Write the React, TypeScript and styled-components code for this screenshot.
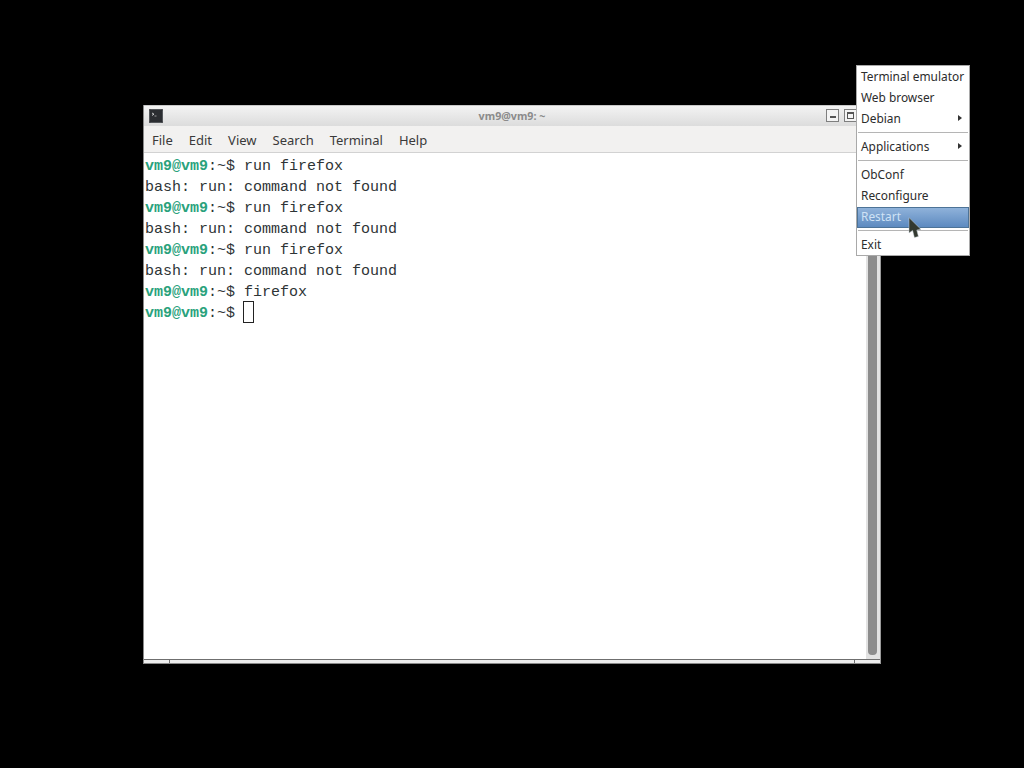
import * as React from "react";
import styled, { createGlobalStyle } from "styled-components";

type Line = { prompt?: boolean; text: string; cursor?: boolean };

const lines: Line[] = [
  { prompt: true, text: "run firefox" },
  { text: "bash: run: command not found" },
  { prompt: true, text: "run firefox" },
  { text: "bash: run: command not found" },
  { prompt: true, text: "run firefox" },
  { text: "bash: run: command not found" },
  { prompt: true, text: "firefox" },
  { prompt: true, text: "", cursor: true },
];

const menuLabels = ["File", "Edit", "View", "Search", "Terminal", "Help"];

export default function App() {
  return (
    <Desktop>
      <GlobalStyle />
      <TermWindow>
        <TitleBar>
          <WinIcon>
            <svg width="14" height="14" viewBox="0 0 14 14">
              <rect width="14" height="14" rx="1" fill="#2b2d31" />
              <rect x="0.5" y="0.5" width="13" height="13" rx="1" fill="none" stroke="#55585c" />
              <path d="M3 4l2 1.2L3 6.4" fill="none" stroke="#d8d8d8" strokeWidth="0.9" />
              <path d="M5.5 7h2" stroke="#a8a8a8" strokeWidth="0.9" />
            </svg>
          </WinIcon>
          <Title>vm9@vm9: ~</Title>
          <WinButton>
            <MinGlyph />
          </WinButton>
          <WinButton>
            <MaxGlyph />
          </WinButton>
        </TitleBar>
        <MenuBar>
          {menuLabels.map((label) => (
            <MenuItem key={label}>{label}</MenuItem>
          ))}
        </MenuBar>
        <TermBody>
          <Screen>
            {lines.map((line, i) => (
              <TermLine key={i}>
                {line.prompt && (
                  <>
                    <Host>vm9@vm9</Host>
                    {":~$ "}
                  </>
                )}
                {line.text}
                {line.cursor && <Cursor />}
              </TermLine>
            ))}
          </Screen>
          <ScrollTrack>
            <ScrollThumb />
          </ScrollTrack>
        </TermBody>
        <BottomEdge>
          <Grip />
          <Grip $right />
        </BottomEdge>
      </TermWindow>
      <RootMenu>
        <RootItem>Terminal emulator</RootItem>
        <RootItem>Web browser</RootItem>
        <RootItem>
          Debian
          <Arrow />
        </RootItem>
        <Sep />
        <RootItem>
          Applications
          <Arrow />
        </RootItem>
        <Sep />
        <RootItem>ObConf</RootItem>
        <RootItem>Reconfigure</RootItem>
        <RootItem $active>Restart</RootItem>
        <Sep />
        <RootItem>Exit</RootItem>
      </RootMenu>
      <Pointer width="14" height="22" viewBox="0 0 14 22">
        <path
          d="M1 0.6L1 16L4.6 13.4L6.4 20.6L10.4 19.4L8.8 13L13 12.4Z"
          fill="#33392f"
          stroke="#c9d2d8"
          strokeWidth="0.5"
        />
      </Pointer>
    </Desktop>
  );
}

//////////
// Style
//////////
const GlobalStyle = createGlobalStyle`
  html, body {
    margin: 0;
    padding: 0;
    background: #000;
  }
`;

const Desktop = styled.div`
  position: relative;
  width: 1024px;
  height: 768px;
  overflow: hidden;
  background: #000;
`;

const TermWindow = styled.div`
  position: absolute;
  left: 143px;
  top: 105px;
  width: 738px;
  height: 559px;
  display: flex;
  flex-direction: column;
  box-sizing: border-box;
  border-left: 1px solid #8a8a8a;
  border-right: 1px solid #9a9a9a;
  background: #fff;
`;

const TitleBar = styled.div`
  height: 21px;
  display: flex;
  align-items: center;
  gap: 5px;
  padding: 0 23px 1px 5px;
  box-sizing: border-box;
  background: linear-gradient(#f3f3f3, #dcdcdc);
  border-top: 1px solid #c8c8c8;
  flex: none;
`;

const WinIcon = styled.div`
  width: 14px;
  height: 14px;
  display: flex;
`;

const Title = styled.div`
  flex: 1;
  text-align: center;
  font: bold 10.7px "Noto Sans", sans-serif;
  color: #8b8b8b;
  padding-left: 35px;
`;

const WinButton = styled.div`
  width: 13px;
  height: 13px;
  box-sizing: border-box;
  border: 1px solid #7f7f7f;
  background: #f4f4f4;
  display: flex;
  align-items: center;
  justify-content: center;
`;

const MinGlyph = styled.div`
  width: 6px;
  height: 2px;
  margin-top: 3px;
  background: #555;
`;

const MaxGlyph = styled.div`
  width: 7px;
  height: 7px;
  box-sizing: border-box;
  border: 1px solid #555;
  border-top-width: 2px;
`;

const MenuBar = styled.div`
  height: 27px;
  display: flex;
  align-items: center;
  gap: 16px;
  padding: 1px 8px 0;
  box-sizing: border-box;
  background: #f2f1f0;
  border-bottom: 1px solid #d2d2d2;
  flex: none;
`;

const MenuItem = styled.div`
  font: 13px "Noto Sans", sans-serif;
  color: #3a3a3a;
`;

const TermBody = styled.div`
  flex: 1;
  min-height: 0;
  display: flex;
`;

const Screen = styled.div`
  flex: 1;
  padding: 3px 0 0 1px;
  font: 15px/21px "Liberation Mono", monospace;
  color: #2e3436;
`;

const TermLine = styled.div`
  height: 21px;
  white-space: pre;
`;

const Host = styled.span`
  font-weight: bold;
  color: #2aa27c;
`;

const Cursor = styled.span`
  display: inline-block;
  width: 11px;
  height: 22px;
  margin: -2px 0 0 -1px;
  box-sizing: border-box;
  border: 1px solid #222;
  vertical-align: top;
`;

const ScrollTrack = styled.div`
  width: 14px;
  padding: 0 3px 4px 2px;
  box-sizing: border-box;
  background: #e2e2e2;
  display: flex;
`;

const ScrollThumb = styled.div`
  width: 9px;
  border-radius: 4px;
  background: #8c8c8c;
`;

const BottomEdge = styled.div`
  height: 5px;
  flex: none;
  display: flex;
  justify-content: space-between;
  box-sizing: border-box;
  border-top: 1px solid #6f6f6f;
  border-bottom: 1px solid #8a8a8a;
  background: #eeeeee;
`;

const Grip = styled.div<{ $right?: boolean }>`
  width: 25px;
  border-left: ${(p) => (p.$right ? "1px solid #6f6f6f" : "none")};
  border-right: ${(p) => (p.$right ? "none" : "1px solid #6f6f6f")};
`;

const RootMenu = styled.div`
  position: absolute;
  left: 856px;
  top: 65px;
  width: 114px;
  height: 191px;
  box-sizing: border-box;
  padding: 1px 0;
  background: #fff;
  border: 1px solid #a9a9a9;
  font: 11.9px "Noto Sans", sans-serif;
  color: #2c2c2c;
`;

const RootItem = styled.div<{ $active?: boolean }>`
  position: relative;
  height: 21px;
  line-height: 19px;
  padding-left: 4px;
  box-sizing: border-box;
  white-space: nowrap;
  ${(p) =>
    p.$active &&
    `
    color: #cfe2f5;
    background: linear-gradient(#8fb2da, #5d8ac0);
    border: 1px solid #4d7397;
    padding-left: 3px;
    line-height: 17px;
  `}
`;

const Arrow = styled.span`
  position: absolute;
  right: 7px;
  top: 6px;
  border-left: 4px solid #333;
  border-top: 3.5px solid transparent;
  border-bottom: 3.5px solid transparent;
`;

const Sep = styled.div`
  height: 1px;
  margin: 2px 1px 4px;
  background: #b5b5b5;
`;

const Pointer = styled.svg`
  position: absolute;
  left: 908px;
  top: 217px;
`;
